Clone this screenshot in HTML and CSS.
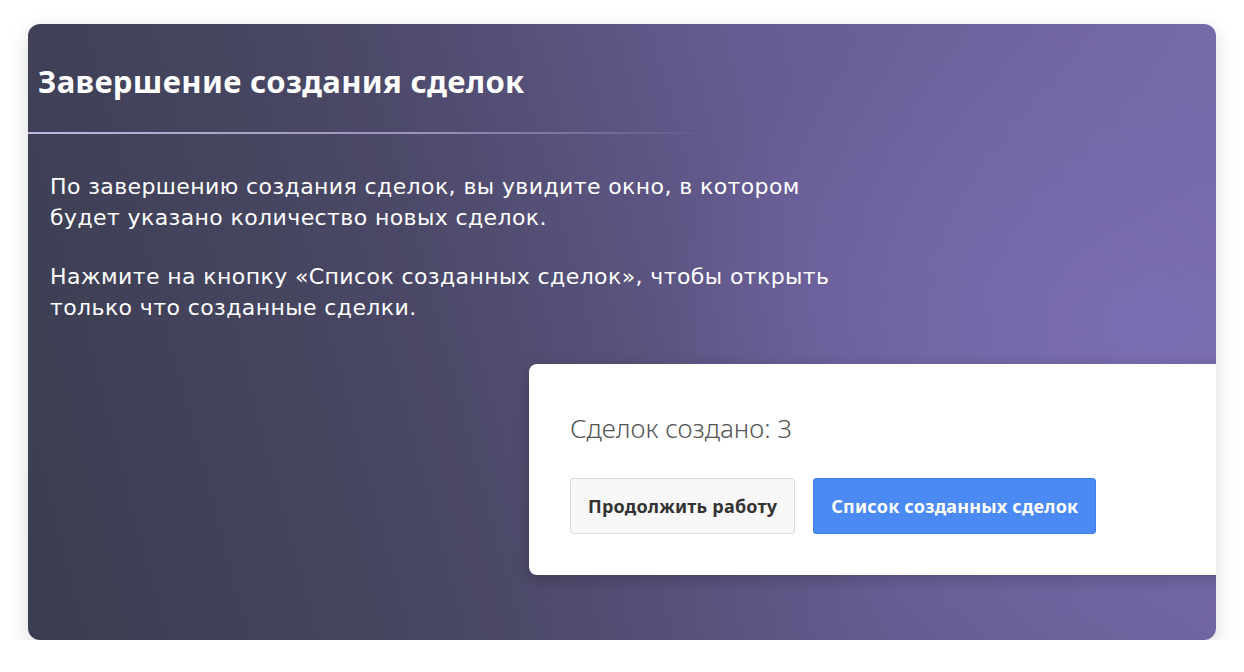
FILE: index.html
```html
<!DOCTYPE html>
<html lang="ru">
<head>
  <meta charset="UTF-8" />
  <title>Завершение создания сделок</title>
  <link rel="stylesheet" href="styles.css">
</head>
<body>
  <div class="slide">
    <h1 class="slide-title">Завершение создания сделок</h1>
    <div class="divider"></div>
    <div class="slide-text">
      <p>По завершению создания сделок, вы увидите окно, в котором<br>будет указано количество новых сделок.</p>
      <p>Нажмите на кнопку «Список созданных сделок», чтобы открыть<br>только что созданные сделки.</p>
    </div>
    <div class="result">
      <div class="result-count">Сделок создано: 3</div>
      <div class="result-actions">
        <button type="button" class="btn btn-continue">Продолжить работу</button>
        <button type="button" class="btn btn-list">Список созданных сделок</button>
      </div>
    </div>
  </div>
</body>
</html>
```

FILE: styles.css
```css
body {
  margin: 0;
  background: #fff;
  font-family: "Noto Sans", sans-serif;
}
.slide {
  width: 1188px;
  height: 616px;
  margin: 24px 0 0 28px;
  border-radius: 12px;
  overflow: hidden;
  box-sizing: border-box;
  background:
    radial-gradient(ellipse 700px 500px at 1120px 300px, rgba(124, 110, 180, 0.9), rgba(124, 110, 180, 0) 70%),
    linear-gradient(75deg, #3a3d4f 0%, #4a4866 35%, #665c92 65%, #7569a6 100%);
  box-shadow: 0 6px 20px rgba(0, 0, 0, 0.15);
  color: #fff;
}
.slide-title {
  margin: 0;
  padding: 36px 0 0 10px;
  height: 72px;
  font-size: 31px;
  font-weight: 700;
  letter-spacing: 0.35px;
}
.divider {
  width: 680px;
  height: 2px;
  background: linear-gradient(90deg, rgba(200, 190, 235, 0.95), rgba(200, 190, 235, 0.6) 60%, rgba(200, 190, 235, 0));
}
.slide-text {
  padding: 37px 0 0 22px;
  font-family: "DejaVu Sans", sans-serif;
  font-size: 22px;
  letter-spacing: 0.4px;
  line-height: 31px;
}
.slide-text p {
  margin: 0 0 28px;
}
.result {
  margin: 41px 0 0 501px;
  width: 720px;
  height: 211px;
  box-sizing: border-box;
  padding: 48px 0 0 41px;
  background: #fff;
  border-radius: 8px;
  box-shadow: 0 4px 16px rgba(0, 0, 0, 0.2);
  color: #333;
}
.result-count {
  font-size: 26px;
  font-weight: 300;
  color: #555;
  line-height: 32px;
}
.result-actions {
  display: flex;
  gap: 18px;
  margin-top: 34px;
}
.btn {
  height: 56px;
  padding: 0 17px;
  font-family: "Noto Sans", sans-serif;
  font-size: 18px;
  font-weight: 700;
  letter-spacing: 0.2px;
  border-radius: 3px;
  cursor: pointer;
}
.btn-continue {
  background: #f8f8f8;
  border: 1px solid #dcdcdc;
  color: #333;
}
.btn-list {
  background: #4b8af5;
  border: 1px solid #3f7fe8;
  color: #fff;
}
```
